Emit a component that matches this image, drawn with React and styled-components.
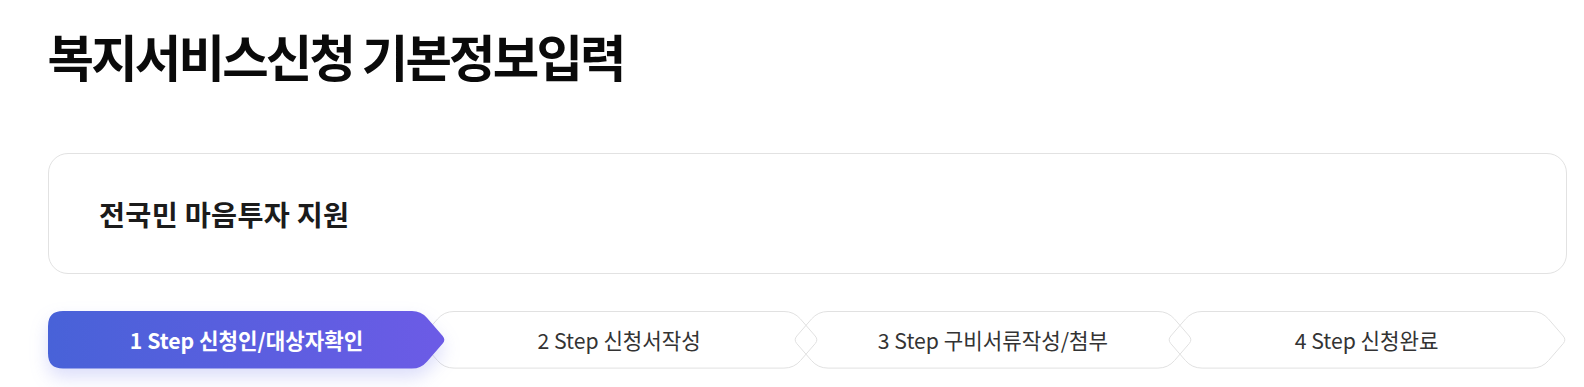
import React from "react";
import styled, { createGlobalStyle } from "styled-components";

const GlobalStyle = createGlobalStyle`
  html, body {
    margin: 0;
    padding: 0;
    background: #ffffff;
    overflow: hidden;
  }
  body {
    font-family: "Noto Sans CJK KR", "Noto Sans", sans-serif;
    color: #111;
  }
  * { box-sizing: border-box; }
`;

const Page = styled.div`
  width: 1584px;
  height: 387px;
  overflow: hidden;
  padding: 0 17.5px 0 47.5px;
`;

const Title = styled.h1`
  margin: 0;
  padding-top: 29.5px;
  font-size: 50.5px;
  line-height: 50.5px;
  font-weight: 700;
  letter-spacing: -2.8px;
  color: #0a0a0a;
  white-space: nowrap;
`;

const ServiceCard = styled.section`
  margin-top: 72.5px;
  height: 121px;
  border: 1px solid #e2e2e2;
  border-radius: 20px;
  display: flex;
  align-items: center;
  padding-left: 50.5px;
`;

const ServiceName = styled.h2`
  margin: 0;
  font-size: 28.3px;
  font-weight: 700;
  color: #1b1b1b;
  letter-spacing: 0.3px;
`;

const StepRow = styled.ol`
  list-style: none;
  margin: 37.5px 0 0 0;
  padding: 0;
  display: flex;
  height: 57.6px;
`;

const StepItem = styled.li`
  position: relative;
  flex: 0 0 ${(p) => p.$w}px;
  height: 57.6px;
  margin-left: ${(p) => (p.$first ? 0 : -26.3)}px;
  z-index: ${(p) => p.$z};
  display: flex;
  align-items: center;
  justify-content: center;
`;

const StepShape = styled.svg`
  position: absolute;
  left: 0;
  top: 0;
  overflow: visible;
  filter: ${(p) =>
    p.$active ? "drop-shadow(0 9px 9px rgba(96, 104, 230, 0.22))" : "none"};
`;

const StepLabel = styled.span`
  position: relative;
  font-size: 21.2px;
  font-weight: ${(p) => (p.$active ? 700 : 400)};
  color: ${(p) => (p.$active ? "#ffffff" : "#333333")};
  letter-spacing: 0;
  white-space: nowrap;
`;

function roundedPath(pts, radii) {
  const n = pts.length;
  let d = "";
  for (let i = 0; i < n; i++) {
    const P = pts[i];
    const A = pts[(i - 1 + n) % n];
    const B = pts[(i + 1) % n];
    const r = radii[i];
    const la = Math.hypot(A[0] - P[0], A[1] - P[1]);
    const lb = Math.hypot(B[0] - P[0], B[1] - P[1]);
    const p1 = [P[0] + ((A[0] - P[0]) / la) * r, P[1] + ((A[1] - P[1]) / la) * r];
    const p2 = [P[0] + ((B[0] - P[0]) / lb) * r, P[1] + ((B[1] - P[1]) / lb) * r];
    d += `${i === 0 ? "M" : "L"}${p1[0].toFixed(2)} ${p1[1].toFixed(2)} Q${P[0]} ${P[1]} ${p2[0].toFixed(2)} ${p2[1].toFixed(2)} `;
  }
  return d + "Z";
}

const H = 57.6;
const D = 25;

function Step({ index, label, width, active, first, z }) {
  const W = width;
  let d;
  if (first) {
    d = roundedPath(
      [
        [0, 0],
        [W - D, 0],
        [W, H / 2],
        [W - D, H],
        [0, H],
      ],
      [15, 9, 5, 9, 15]
    );
  } else {
    d = roundedPath(
      [
        [D, 0.5],
        [W - D, 0.5],
        [W - 0.5, H / 2],
        [W - D, H - 0.5],
        [D, H - 0.5],
        [0.5, H / 2],
      ],
      [10, 10, 5, 10, 10, 5]
    );
  }
  const gid = `stepGrad${index}`;
  return (
    <StepItem $w={W} $first={first} $z={z}>
      <StepShape $active={active} width={W} height={H} viewBox={`0 0 ${W} ${H}`}>
        <defs>
          <linearGradient id={gid} x1="0" y1="0" x2="1" y2="0">
            <stop offset="0" stopColor="#4862d8" />
            <stop offset="1" stopColor="#6c5be6" />
          </linearGradient>
        </defs>
        {active ? (
          <path d={d} fill={`url(#${gid})`} />
        ) : (
          <path d={d} fill="none" stroke="#e1e1e1" strokeWidth="1" />
        )}
      </StepShape>
      <StepLabel $active={active}>{label}</StepLabel>
    </StepItem>
  );
}

const steps = [
  "1 Step 신청인/대상자확인",
  "2 Step 신청서작성",
  "3 Step 구비서류작성/첨부",
  "4 Step 신청완료",
];

export default function App() {
  return (
    <>
      <GlobalStyle />
      <Page>
        <Title>복지서비스신청 기본정보입력</Title>
        <ServiceCard>
          <ServiceName>전국민 마음투자 지원</ServiceName>
        </ServiceCard>
        <StepRow>
          {steps.map((s, i) => (
            <Step
              key={s}
              index={i}
              label={s}
              width={i === 0 ? 398 : 400}
              first={i === 0}
              active={i === 0}
              z={10 - i}
            />
          ))}
        </StepRow>
      </Page>
    </>
  );
}
